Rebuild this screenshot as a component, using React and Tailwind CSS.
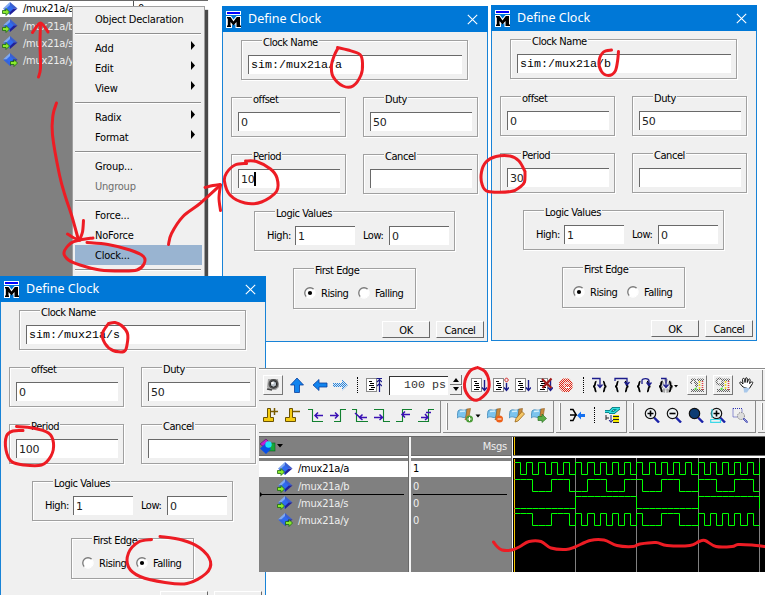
import React from "react";

const FACE = "font-['DejaVu_Sans_Condensed','DejaVu_Sans',sans-serif] text-[11px] whitespace-pre";
const UI = `${FACE} tracking-[-0.45px]`;
const UI_WIDE = `${FACE} tracking-[-0.22px]`;
const DIGITS = "font-['DejaVu_Sans',sans-serif] text-[11px] tracking-[-0.2px] whitespace-pre";
const MONO = "font-['Liberation_Mono',monospace] text-[11.67px] whitespace-pre";

/* Turns a list of points into a rounded freehand stroke. */
function smooth(points) {
  let d = `M${points[0][0]} ${points[0][1]}`;
  for (let i = 0; i < points.length - 1; i++) {
    const p0 = points[i - 1] || points[i];
    const p1 = points[i];
    const p2 = points[i + 1];
    const p3 = points[i + 2] || p2;
    d += `C${p1[0] + (p2[0] - p0[0]) / 6} ${p1[1] + (p2[1] - p0[1]) / 6} ${p2[0] - (p3[0] - p1[0]) / 6} ${p2[1] - (p3[1] - p1[1]) / 6} ${p2[0]} ${p2[1]}`;
  }
  return d;
}

const STROKES = [
  [[38.5, 77], [40.5, 68], [40, 43], [40.5, 24]],
  [[32.5, 32.5], [40.5, 23], [48, 32]],
  [[56.5, 103], [53, 115], [52.5, 135], [59.5, 175], [65.5, 197], [71.5, 215], [78.5, 240]],
  [[67.5, 234], [74, 238], [80, 240]],
  [[83.5, 220.5], [82.5, 232], [79.5, 240]],
  [[93, 238], [80, 240], [71, 243], [64, 252.5], [68.5, 260], [80, 265], [100, 270], [122, 271], [137, 270], [144, 264], [143.5, 256.5], [130, 250], [108, 244.5], [87, 242.5]],
  [[168.5, 244.5], [171.5, 233.5], [183, 216.5], [200, 203.5], [220.5, 185]],
  [[205, 187.5], [213, 185.5], [220, 184.5]],
  [[220.5, 185], [219, 198], [220.5, 210.5]],
  [[337.5, 47.5], [348, 50], [360, 54.5], [362.5, 63.5], [361, 75], [353, 86], [343, 86], [333, 76.5], [331.5, 65], [334.5, 55], [337.5, 49]],
  [[611.5, 50], [603.5, 52], [599, 61.5], [601.5, 71.5], [608.5, 75.5], [615, 71.5], [617.5, 61.5], [618.5, 51.5]],
  [[246.5, 163.5], [235, 165], [226.5, 173], [224.5, 181.5], [230, 195], [245, 203], [261.5, 202], [276.5, 191.5], [277, 178], [270.5, 169], [256.5, 161.5], [245.5, 161]],
  [[525, 171.5], [519, 161], [510, 156], [496, 156.5], [486, 162], [481.5, 172], [482, 184], [488, 191.5], [511, 191.5], [520, 187], [524.5, 182], [525, 171.5]],
  [[108.5, 323.5], [115, 322.5], [121.5, 325.5], [127.5, 333.5], [127, 345], [124, 351.5], [113, 350.5], [105, 343.5], [102.5, 333.5], [108.5, 323.5]],
  [[23, 430.5], [13, 431], [6.5, 436], [6, 450], [11.5, 461.5], [24, 465], [41.5, 465], [51, 456], [53.5, 443], [48.5, 433], [33, 428], [16.5, 426.5]],
  [[151.5, 539.5], [138.5, 542], [128.5, 553], [128.5, 567], [140, 576.5], [165, 582.5], [187, 583.5], [206, 573.5], [210.5, 561.5], [200, 548], [182, 540], [160, 536.5]],
  [[477.5, 367.5], [470, 371], [464.5, 384], [468.5, 396], [477.5, 400], [487.5, 391.5], [489, 381.5], [485, 371.5], [477.5, 367.5]],
  [[493.5, 542], [497, 546.5], [502, 550], [512, 550], [520, 546.5], [529, 541.5], [541, 541.5], [551, 548], [566, 549.5], [575, 547], [590, 540.5], [604, 540], [617, 545.5], [633, 546.5], [640, 544], [656, 542.5], [667, 545.5], [690, 545.5], [699, 541.5], [705, 540.5], [716, 546.5], [732, 546.5], [738, 544.5], [752, 545], [765, 546.5]],
];

function Markup() {
  return (
    <svg className="absolute inset-0 pointer-events-none" width="765" height="595" fill="none" stroke="#ed1c24" strokeWidth="3" strokeLinecap="round" strokeLinejoin="round">
      {STROKES.map((s, i) => <path key={i} d={smooth(s)} />)}
    </svg>
  );
}

/* ---------- signal list icon ---------- */
function Signal({ out }) {
  return (
    <svg width="16" height="16" className="shrink-0">
      <path d="M8 1L1 7.500H8Z" fill="#7fa8f0" />
      <path d="M8 1L15.500 7.500H8Z" fill="#3a5fd0" />
      <path d="M1 7.500L8 14V7.500Z" fill="#3464dc" />
      <path d="M15.500 7.500L8 14V7.500Z" fill="#20209c" />
      <path d="M8 4L11.700 7.500L8 11L4.300 7.500Z" fill="#2f6af0" />
      <path transform={out ? "translate(8 -1)" : "translate(0 -1)"} d="M.5 10.500H4V8.500L7.500 12L4 15.500V13.500H.5Z" fill="#8bea2c" stroke="#1d6b10" strokeWidth=".8" />
    </svg>
  );
}

/* ---------- dialog ---------- */
function Frame({ label, className, labelClass, children }) {
  return (
    <div className={`flex shrink-0 flex-col border border-[#a0a0a0] shadow-[1px_1px_0_#fff,inset_1px_1px_0_#fff] ${className}`}>
      <span className={`${UI} -mt-[5px] h-[14px] self-start bg-[#f0f0f0] px-px leading-[14px] ${labelClass}`}>{label}</span>
      {children}
    </div>
  );
}

function Entry({ className, mono, caret, children }) {
  return (
    <div className={`flex h-[19px] shrink-0 items-center border-l border-t border-[#696969] bg-white pl-[2px] ${mono ? "text-black" : "pt-[2px] text-[#222]"} ${className}`}>
      <span className={`${mono ? MONO : DIGITS} leading-[14px]`}>{children}</span>
      {caret && <span className="-ml-px -mt-[2px] h-[14px] w-[2px] bg-black" />}
    </div>
  );
}

function Radio({ on }) {
  return (
    <svg width="12" height="12" className="shrink-0">
      <circle cx="6" cy="6" r="5" fill="#fff" />
      <path d="M2.300 9.700A5.200 5.200 0 0 1 9.700 2.300" fill="none" stroke="#7a7a7a" strokeWidth="1.300" />
      <path d="M2.300 9.700A5.200 5.200 0 0 0 9.700 2.300" fill="none" stroke="#fff" />
      {on && <circle cx="6" cy="6" r="2.100" fill="#000" />}
    </svg>
  );
}

function Button({ children }) {
  return (
    <div className={`${UI} flex h-[17px] w-[48px] items-center justify-center border border-b-[#696969] border-l-white border-r-[#696969] border-t-white bg-[#f0f0f0] pt-[2px] leading-[14px] text-black`}>
      {children}
    </div>
  );
}

function Dialog({ className, name, period, caret, falling }) {
  return (
    <div className={`absolute flex h-[336px] w-[266px] flex-col border border-[#1883d7] bg-[#f0f0f0] text-black ${className}`}>
      <div className="-mx-px -mt-px flex h-[26px] shrink-0 items-center bg-[#0078d7] pl-1 pr-[10px] text-white">
        <svg width="17" height="17">
          <rect x="0" y="0" width="15" height="4" fill="#fff" />
          <rect x="1" y="1" width="13" height="2" fill="#0000ff" />
          <path d="M0 5H5L7.500 8.500L10.500 5H15V17H9.500V13.500H6V17H0Z" fill="#fff" />
          <path d="M1 6H4.500L7.500 10.500L10.800 6H14V14.500H15V16H10.500V11L7.500 14.500L4.500 11V14.500H5V16H1V14.500H1.800V7.500H1Z" fill="#000" />
        </svg>
        <span className="ml-[5px] flex-1 whitespace-pre font-['Noto_Sans',sans-serif] text-[12.5px] leading-[18px]">Define Clock</span>
        <svg width="11" height="11" stroke="#fff" strokeWidth="1.100"><path d="M.8 .8L10.200 10.200M10.200 .8L.8 10.200" /></svg>
      </div>
      <div className="flex flex-col gap-[17px] pt-2">
        <Frame label="Clock Name" className="ml-[18px] h-[40px] w-[227px] pl-[6px]" labelClass="ml-[14px]">
          <Entry mono className="mt-[5px] w-[214px]">{name}</Entry>
        </Frame>
        <div className="ml-2 flex gap-[17px]">
          <Frame label="offset" className="h-[40px] w-[115px] pl-[6px]" labelClass="ml-[14px]">
            <Entry className="mt-[5px] w-[102px]">0</Entry>
          </Frame>
          <Frame label="Duty" className="h-[40px] w-[115px] pl-[6px]" labelClass="ml-[14px]">
            <Entry className="mt-[5px] w-[102px]">50</Entry>
          </Frame>
        </div>
        <div className="ml-2 flex gap-[17px]">
          <Frame label="Period" className="h-[40px] w-[115px] pl-[6px]" labelClass="ml-[14px]">
            <Entry caret={caret} className="mt-[5px] w-[102px]">{period}</Entry>
          </Frame>
          <Frame label="Cancel" className="h-[40px] w-[115px] pl-[6px]" labelClass="ml-[14px]">
            <Entry className="mt-[5px] w-[102px]" />
          </Frame>
        </div>
        <Frame label="Logic Values" className="ml-[31px] h-[40px] w-[201px]" labelClass="ml-[20px]">
          <div className="mt-[5px] flex items-center pl-[12px]">
            <span className={`${UI} w-[28px] pt-[2px]`}>High:</span>
            <Entry className="w-[60px]">1</Entry>
            <span className={`${UI} ml-[8px] w-[26px] pt-[2px]`}>Low:</span>
            <Entry className="w-[60px]">0</Entry>
          </div>
        </Frame>
        <Frame label="First Edge" className="ml-[70px] h-[41px] w-[123px]" labelClass="ml-[20px]">
          <div className="mt-[6px] flex items-center pl-[10px]">
            <Radio on={!falling} />
            <span className={`${UI} ml-[5px] w-[32px] pt-[2px]`}>Rising</span>
            <span className="ml-[5px] flex"><Radio on={falling} /></span>
            <span className={`${UI} ml-[5px] pt-[2px]`}>Falling</span>
          </div>
        </Frame>
      </div>
      <div className="mt-[12px] flex gap-[6px] pl-[159px]">
        <Button>OK</Button>
        <Button>Cancel</Button>
      </div>
    </div>
  );
}

/* ---------- context menu over the objects list ---------- */
function Item({ children, sub, off, active }) {
  return (
    <div className={`flex h-[20px] items-center pl-[20px] pr-[7px] pt-[2px] ${active ? "bg-[#99b4d1]" : ""} ${off ? "text-[#6d6d6d]" : "text-black"}`}>
      <span className={`${UI_WIDE} flex-1 leading-[14px]`}>{children}</span>
      {sub && <svg width="4" height="9" className="-mt-[7px]"><path d="M0 0L4 4.500L0 9Z" /></svg>}
    </div>
  );
}

const Rule = () => (
  <div className="flex h-[9px] items-center"><div className="h-[2px] w-[126px] border-b border-t border-b-white border-t-[#8f8f8f]" /></div>
);

function ContextMenu() {
  return (
    <div className="absolute left-[72px] top-[6px] h-[276px] w-[133px] border border-[#a0a0a0] bg-[#f0f0f0] px-[2px] pt-[2px] shadow-[3px_4px_1px_#4a4a4a]">
      <Item>Object Declaration</Item>
      <Rule />
      <Item sub>Add</Item>
      <Item sub>Edit</Item>
      <Item sub>View</Item>
      <Rule />
      <Item sub>Radix</Item>
      <Item sub>Format</Item>
      <Rule />
      <Item>Group...</Item>
      <Item off>Ungroup</Item>
      <Rule />
      <Item>Force...</Item>
      <Item>NoForce</Item>
      <Item active>Clock...</Item>
      <Rule />
    </div>
  );
}

function ObjectsPane() {
  const rows = ["a", "b", "s", "y"];
  return (
    <div className="absolute left-0 top-0 h-[280px] w-[208px] overflow-hidden border-t border-[#696969] bg-[#808080]">
      {rows.map((r, i) => (
        <div key={r} className={`flex items-center ${i === 0 ? "h-[16px] bg-white text-black" : "h-[17px] text-[#eee]"}`}>
          <span className="ml-[2px] flex"><Signal out={r === "y"} /></span>
          <span className={`${UI_WIDE} ml-[5px] w-[110px] ${i ? "pt-[2px]" : ""} leading-[14px]`}>/mux21a/{r}</span>
          {i === 0 && <span className="h-full w-px bg-[#555]" />}
          {i === 0 && <span className={`${UI} ml-[4px]`}>0</span>}
        </div>
      ))}
    </div>
  );
}

/* ---------- toolbar icons ---------- */
const Svg = ({ w = 16, h = 16, ml, children }) => (
  <svg width={w} height={h} className={`shrink-0 ${ml}`} fill="none" stroke="none">{children}</svg>
);
const Dots = ({ className }) => <span className={`h-[16px] w-px shrink-0 border-l border-dotted border-black ${className}`} />;

const Doc = () => (
  <>
    <rect x=".5" y="1.500" width="10" height="13" fill="#fff" stroke="#8a8a8a" />
    <path d="M3 4.500H6M4 6.500H8M3 8.500H8M5 10.500H9M3 12.500H8" stroke="#000" />
  </>
);
const DownArrow = () => <path d="M13.500 3V13M11 10.500L13.500 13.500L16 10.500" stroke="#1c1c8c" strokeWidth="1.400" />;

const Braces = ({ arrow }) => (
  <>
    <path d="M4.500 4.500C2 4.500 4.500 9.500 1 9.500C4.500 9.500 2 14.500 4.500 14.500M11 4.500C13.500 4.500 11 9.500 14.500 9.500C11 9.500 13.500 14.500 11 14.500" stroke="#000" strokeWidth="1.700" />
    <path d={arrow} stroke="#1c1c8c" strokeWidth="1.300" />
  </>
);

const Raised = ({ ml, children }) => (
  <span className={`flex h-[20px] w-[20px] shrink-0 items-center justify-center border border-b-[#777] border-l-white border-r-[#777] border-t-white ${ml}`}>{children}</span>
);

const Board = ({ round }) => (
  <Svg ml="" w={16} h={16}>
    <defs>
      <pattern id="grain" width="2" height="2" patternUnits="userSpaceOnUse"><rect width="2" height="2" fill="#ececec" /><path d="M0 0h1v1H0zM1 1h1v1H1z" fill="#666" /></pattern>
    </defs>
    <path d="M8 1.500H15V4H8ZM6 5H9V10H6ZM2 12H15V15H2Z" fill="url(#grain)" />
    {round
      ? <circle cx="4.500" cy="4.500" r="3" stroke="url(#grain)" strokeWidth="2" />
      : <path d="M2 1.500H7V4H2ZM1 4H3V7H1ZM5 4H7V7H5Z" fill="url(#grain)" />}
    <path d="M10.500 4V13" stroke="#e9dc22" strokeWidth="1.600" strokeDasharray="2 1" />
    <path d="M13.500 4V14" stroke="#e24040" strokeDasharray="1 1" strokeWidth="1.600" />
    <path d="M5 12L7.500 10V13.500Z" fill="#4adb3c" />
  </Svg>
);

function TopBar() {
  return (
    <div className="flex h-[33px] shrink-0 items-center border-b border-t border-[#8a8a8a] bg-[#f0f0f0] pt-px shadow-[inset_0_1px_0_#fff]">
      <Raised ml="ml-1">
        <Svg ml="" w={14} h={16}>
          <path d="M2 2H12L13 10L10 13H3L1 10Z" fill="#a8a8a8" />
          <circle cx="7.500" cy="7" r="5" fill="#505050" /><circle cx="7.500" cy="7" r="3.200" fill="#b8c0c8" stroke="#222" /><circle cx="6.500" cy="6" r="1.300" fill="#fff" />
          <path d="M1 12L6 13" stroke="#444" strokeWidth="1.500" />
        </Svg>
      </Raised>
      <Svg ml="ml-[6px]"><path d="M8 1L14.500 8H10.500V15.500H5.500V8H1.500Z" fill="#1284ee" stroke="#0b3f9c" strokeWidth=".8" /></Svg>
      <Svg ml="ml-[7px]"><path d="M1 8L7 2.500V6H15V10H7V13.500Z" fill="#1284ee" stroke="#0b3f9c" strokeWidth=".8" /></Svg>
      <Svg ml="ml-[5px]">
        <defs><pattern id="stip" width="2" height="2" patternUnits="userSpaceOnUse"><rect width="2" height="2" fill="#dce8f4" /><path d="M0 0h1v1H0zM1 1h1v1H1z" fill="#2a84d8" /></pattern></defs>
        <path d="M15 8L9 2.500V6H0V10H9V13.500Z" fill="url(#stip)" />
      </Svg>
      <Dots className="ml-[8px]" />
      <Svg ml="ml-[8px]"><Doc /><path d="M13.500 2V15M11 5L13.500 2.500L16 5M11 9L13.500 6.500L16 9M10.500 1.500H16" stroke="#1c1c8c" strokeWidth="1.200" /></Svg>
      <div className={`${MONO} ml-[7px] flex h-[19px] w-[59px] shrink-0 items-center justify-end border-l border-t border-[#333] bg-white pr-[2px] text-[#333]`}>100 ps</div>
      <div className="ml-[2px] flex h-[20px] w-[12px] shrink-0 flex-col gap-px">
        <span className="flex flex-1 items-center justify-center border-b border-r border-[#777]"><Svg ml="" w={8} h={5}><path d="M1 5L4 1L7 5Z" fill="#000" /></Svg></span>
        <span className="flex flex-1 items-center justify-center border-b border-r border-[#777]"><Svg ml="" w={8} h={5}><path d="M1 0L4 4L7 0Z" fill="#000" /></Svg></span>
      </div>
      <Svg ml="ml-[9px]"><Doc /><DownArrow /></Svg>
      <Svg ml="ml-[6px]"><Doc /><path d="M13.500 6V13M11 10.500L13.500 13.500L16 10.500" stroke="#1c1c8c" strokeWidth="1.400" /><path d="M13.500 .8L15.500 3L13.500 5.200L11.500 3Z" stroke="#d02020" /></Svg>
      <Svg ml="ml-[6px]"><Doc /><DownArrow /></Svg>
      <Svg ml="ml-[6px]"><Doc /><DownArrow /><path d="M5 2L14.500 11M14.500 1.500L5.500 11" stroke="#a01818" strokeWidth="2.200" /></Svg>
      <Svg ml="ml-[5px]">
        <defs><pattern id="warn" width="2" height="2" patternUnits="userSpaceOnUse"><rect width="2" height="2" fill="#f4e6e2" /><path d="M0 0h1v1H0zM1 1h1v1H1z" fill="#e02010" /></pattern></defs>
        <path d="M5 1.500H11L14.500 5.500V11L11 15H5L1 11V5.500Z" fill="url(#warn)" />
        <path d="M11.500 6H8C5.500 6 5.500 10.500 8 10.500H11.500" stroke="#fff" strokeWidth="1" />
      </Svg>
      <Dots className="ml-[9px]" />
      <Svg ml="ml-[8px]"><Braces arrow="M0 1.500H8V10M5.500 7.500L8 10.500L10.500 7.500" /></Svg>
      <Svg ml="ml-[6px]"><Braces arrow="M1 4V1.500H13V7M10.500 5L13 8L15.500 5" /></Svg>
      <Svg ml="ml-[6px]"><Braces arrow="M6 7V3.500C6 1 13 1 13 4V8M10.500 5.500L13 8.500L15.500 5.500" /></Svg>
      <Svg w={20} ml="ml-[6px]">
        <circle cx="8" cy="9" r="5" stroke="#aaa" strokeWidth="4" strokeDasharray="3 1.300" />
        <Braces arrow="M3 1.500H8V10M5.500 7.500L8 10.500L10.500 7.500" />
        <path d="M16 8H20L18 10.500Z" fill="#000" />
      </Svg>
      <Raised ml="ml-[9px]"><Board /></Raised>
      <Raised ml="ml-[6px]"><Board round /></Raised>
      <Svg ml="ml-[5px]">
        <path d="M5 10L2 6.500C1 5 3 4.500 4 6L5 7L4.500 2.500C4.500 1 6.500 1 6.700 2.500L7 5.500L7.500 1.500C7.800 .3 9.300 .5 9.300 2L9.300 5.500L10.500 2.500C11 1.500 12.500 2 12.200 3.300L11.500 6.500L13.500 5C14.500 4.500 15.300 5.500 14.500 6.500L11 12Z" fill="#fff" stroke="#111" />
        <path d="M5.500 10.500L12 11L9 15.500H6Z" fill="#a9c8ea" />
      </Svg>
      <span className="ml-[8px] h-full w-px bg-[#8a8a8a]" />
    </div>
  );
}

const EDGES = [
  { g: "M0 2.500H4.500V14.500H15", a: "M15 8.500H7M10 5.500L7 8.500L10 11.500" },
  { g: "M4 14.500H10.500V2.500H16", a: "M0 8.500H8M5 5.500L8 8.500L5 11.500" },
  { g: "M0 2.500H4.500V14.500H16", a: "M3 6L8 10.500H15M10.500 7.500L7.500 10.500L10.500 13" },
  { g: "M0 2.500H9.500V14.500H16", a: "M0 10.500H8M5.500 7.500L8.500 10.500L5.500 13" },
  { g: "M0 14.500H6.500V2.500H16", a: "M14 7.500H6M9 4.500L6 7.500L9 10.500" },
  { g: "M0 14.500H10.500V2.500H16", a: "M3 10.500H10M7 7L10 10.500L7 13M8 5.500H13" },
];

const Group = ({ className, grip, children }) => (
  <div className={`flex h-[32px] shrink-0 items-center border-b border-r border-[#8a8a8a] pb-[3px] ${className}`}>
    {grip && <span className="ml-[3px] mt-[3px] h-[27px] w-[2px] shrink-0 border-l border-r border-l-white border-r-[#8a8a8a]" />}
    {children}
  </div>
);

const Flag = () => (
  <>
    <path d="M1 4C4 1 6 5 10 2L9 10C6 12 4 8 0 11Z" fill="#7cc4ee" stroke="#3c86b8" strokeWidth=".8" />
    <path d="M10 2L13.500 1.500L12 10L8 13L9 9Z" fill="#c98a3c" stroke="#8f5c20" strokeWidth=".6" />
    <path d="M3 4.500L8 4" stroke="#d6f0fc" strokeWidth="1.500" />
  </>
);

const Lens = ({ fill = "#eef2f4", inner }) => (
  <>
    <path d="M10 10.500L15 15.500" stroke="#1a22a8" strokeWidth="2.400" />
    <circle cx="6.500" cy="6.500" r="5.200" fill={fill} stroke="#111" strokeWidth="1.200" />
    {inner && <path d={inner} stroke="#000" strokeWidth="1.600" />}
  </>
);

const Cursor = ({ sign }) => (
  <>
    <path d="M4.500 1.500H7.500V10.500H10.500V14.500H.5V10.500H4.500Z" fill="#f5cc10" stroke="#6b5200" strokeWidth="1" />
    <path d={sign} stroke="#7a5c00" strokeWidth="1.500" />
  </>
);

function SecondBar() {
  return (
    <div className="flex h-[32px] shrink-0 gap-[2px] bg-[#f0f0f0]">
      <Group className="w-[182px]">
        <Svg ml="ml-1"><Cursor sign="M8 4.500H15M11.500 1V8" /></Svg>
        <Svg ml="ml-[6px]"><Cursor sign="M8 4.500H15" /></Svg>
        {EDGES.map((e, i) => (
          <Svg key={i} ml={i === 0 ? "ml-[7px]" : "ml-[6px]"}>
            <path d={e.g} stroke="#128030" strokeWidth="1.100" />
            <path d={e.a} stroke="#3a10b4" strokeWidth="1.500" />
          </Svg>
        ))}
      </Group>
      <Group grip className="w-[111px]">
        <Svg w={24} ml="ml-[9px]"><Flag /><circle cx="12.500" cy="12" r="3.500" fill="#4c9c38" /><path d="M12.500 10V14M10.500 12H14.500" stroke="#fff" /><path d="M18.500 7.500H23.500L21 10.500Z" fill="#000" /></Svg>
        <Svg ml="ml-[6px]"><Flag /><circle cx="12.500" cy="12" r="3.500" fill="#ee6018" /><path d="M10.500 12H14.500" stroke="#fff" /></Svg>
        <Svg ml="ml-[6px]"><Flag /><path d="M6 15L7 11.500L13 4.500L15.500 7L9 14Z" fill="#f5c868" stroke="#9a6414" strokeWidth=".8" /></Svg>
        <Svg ml="ml-[6px]"><Flag /><path d="M7 9.500H11V7L15.500 11.500L11 15.500V13.500H7Z" fill="#5cae48" stroke="#2c7424" strokeWidth=".7" /></Svg>
      </Group>
      <Group grip className="w-[71px]">
        <Svg ml="ml-[9px]"><path d="M0 2.500H3L6 7.500L3 13.500H0M0 8H7" stroke="#000" strokeWidth="1.500" /><path d="M7 8.500L11 4.500V7H15V10H11V12.500Z" fill="#1470f0" /></Svg>
        <Dots className="ml-[8px]" />
        <Svg ml="ml-[9px]"><path d="M1 4.500H6L9 1.500H15L10 5.500H5" fill="none" stroke="#006a70" strokeWidth="3" /><path d="M1 4.500H6L9 1.500H15L10 5.500H5" stroke="#30e0e0" strokeWidth="1.400" /><rect x="9" y="8" width="6" height="8" fill="#f4e800" /><path d="M9 9.500H15M9 12.500H15M9 15.500H15M2 8V11H5M2 11V13" stroke="#222" /><path d="M7 8V15M5 13L7 15.500L9 13" stroke="#1c1c8c" /></Svg>
      </Group>
      <Group grip className="w-[127px]">
        <Svg ml="ml-[10px]"><Lens inner="M3.500 6.500H9.500M6.500 3.500V9.500" /></Svg>
        <Svg ml="ml-[6px]"><Lens inner="M3.500 6.500H9.500" /></Svg>
        <Svg ml="ml-[6px]"><Lens fill="#0c3c74" /></Svg>
        <Svg ml="ml-[6px]"><Lens inner="M3.500 6.500H9.500M6.500 3.500V9.500" /><path d="M.7 12.500H10.500V15.300H.7ZM2 2V11" stroke="#3cd8e8" strokeWidth="1.200" /></Svg>
        <Svg ml="ml-[6px]"><path d="M1 1.500H10V10H1Z" stroke="#2c30b0" strokeDasharray="1 1" /><circle cx="9" cy="9" r="3.500" fill="#ddd" stroke="#777" strokeDasharray="1 1" /><path d="M11.500 11.500L15.500 15.500" stroke="#1a22a8" strokeWidth="2" strokeDasharray="1 .6" /></Svg>
      </Group>
      <Group grip className="w-[20px]" />
    </div>
  );
}

/* ---------- wave viewer ---------- */
const X0 = 0.95;
const UNIT = 6.12;
const clkA = (k) => k % 2 === 0;
const clkB = (k) => Math.floor(k / 3) % 2 === 0;
const clkS = (k) => Math.floor(k / 10) % 2 === 1;
const out = (k) => (clkS(k) ? clkA(k) : clkB(k));

function trace(fn, hi, lo) {
  let d = "";
  for (let k = 0; k < 40; k++) {
    const y = fn(k) ? hi : lo;
    const x1 = Math.round(X0 + k * UNIT) + 0.5;
    const x2 = Math.round(X0 + (k + 1) * UNIT) + 0.5;
    d += `${k ? "L" : "M"}${x1} ${y}L${x2} ${y}`;
  }
  return d;
}

function Waves() {
  return (
    <svg width="252" height="114" className="block bg-black" fill="none">
      <path d="M62.500 0V114M123.500 0V114M185.500 0V114M246.500 0V114" stroke="#808080" />
      <g stroke="#00ff00">
        <path d={trace(clkA, 4.5, 16.5) + "V4.5"} />
        <path d={trace(clkB, 21.5, 33.5)} />
        <path d={trace(clkS, 38.5, 50.5) + "V50.5"} />
        <path d={trace(out, 55.5, 67.5)} />
      </g>
      <path d="M1.500 1V114" stroke="#f4c400" />
      <path d="M1 4.500H2M1 21.500H2M1 50.500H2M1 55.500H2" stroke="#f04020" />
    </svg>
  );
}

function WaveWindow() {
  const rows = [["a", "1"], ["b", "0"], ["s", "0"], ["y", "0"]];
  return (
    <div className="absolute left-[259px] top-[368px] flex h-[204px] w-[506px] flex-col overflow-hidden bg-[#f0f0f0]">
      <TopBar />
      <SecondBar />
      <div className="mt-[3px] flex h-[136px] border-t border-[#696969]">
        <div className="flex w-[150px] flex-col border-r border-[#696969] bg-[#808080]">
          <div className="flex h-[19px] items-center border-b border-[#696969]">
            <svg width="17" height="17"><path d="M1 6L7 1L10 4L5 9Z" fill="#c020d0" stroke="#50105c" strokeWidth=".6" /><rect x="9" y="5" width="7" height="8" fill="#18a838" stroke="#0b5a1c" strokeWidth=".6" /><path d="M1 10.500L7 5L12 11L7 16Z" fill="#0850e8" /><circle cx="9.500" cy="6.500" r="3.200" fill="#20e0f8" /></svg>
            <svg width="6" height="4" className="ml-px"><path d="M0 0H6L3 3.500Z" /></svg>
          </div>
          <div className="mb-[3px] h-[2px] bg-white" />
          {rows.map(([n], i) => (
            <div key={n} className={`flex items-center ${i === 0 ? "h-[16px] bg-white text-black" : "h-[17px] text-[#eee]"}`}>
              <span className="ml-[18px] flex"><Signal out={n === "y"} /></span>
              <span className={`${UI_WIDE} ml-[5px] leading-[14px] ${i ? "pt-[2px]" : ""}`}>/mux21a/{n}</span>
            </div>
          ))}
        </div>
        <div className="w-[2px] bg-[#f4f4f4]" />
        <div className="flex w-[101px] flex-col border-r border-[#696969] bg-[#808080]">
          <div className="flex h-[19px] items-center justify-end border-b border-[#696969] pr-[4px] pt-[2px] text-[#eee]">
            <span className={UI_WIDE}>Msgs</span>
          </div>
          <div className="mb-[3px] h-[2px] bg-white" />
          {rows.map(([n, v], i) => (
            <div key={n} className={`flex items-center pl-[2px] ${i === 0 ? "h-[16px] bg-white text-black" : "h-[17px] pt-[2px] text-[#eee]"}`}>
              <span className={`${UI} leading-[14px]`}>{v}</span>
            </div>
          ))}
        </div>
        <div className="w-px bg-[#f4f4f4]" />
        <div className="flex w-[252px] flex-col bg-white">
          <div className="flex h-[19px] border-b border-[#696969] bg-black"><span className="ml-px w-px bg-[#f4c400]" /></div>
          <div className="h-[2px] bg-white" />
          <Waves />
        </div>
      </div>
      <svg className="absolute left-0 top-[122px]" width="252" height="9"><path d="M2 4.500H145M154 4.500H248" stroke="#000" /><path d="M1 2L3.500 4.500L1 7Z" /></svg>
    </div>
  );
}

export default function App() {
  return (
    <div className="relative h-[595px] w-[765px] overflow-hidden bg-white">
      <ObjectsPane />
      <ContextMenu />
      <Dialog className="left-[222px] top-[6px]" name="sim:/mux21a/a" period="10" caret />
      <Dialog className="left-[491px] top-[5px]" name="sim:/mux21a/b" period="30" />
      <Dialog className="left-0 top-[276px]" name="sim:/mux21a/s" period="100" falling />
      <WaveWindow />
      <Markup />
    </div>
  );
}
